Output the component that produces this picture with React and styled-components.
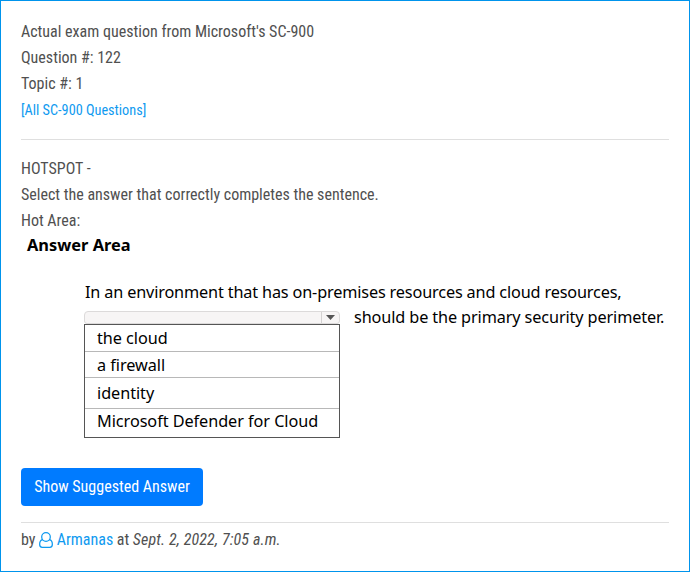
import React from "react";
import styled, { createGlobalStyle } from "styled-components";

const GlobalStyle = createGlobalStyle`
  *, *::before, *::after { box-sizing: border-box; }
  body { margin: 0; background: #fff; }
`;

const Card = styled.main`
  width: 690px;
  height: 572px;
  padding: 18px 20px 0;
  border: 1px solid #0094ec;
  background: #fff;
  color: #505050;
  font: 16px/26px "Roboto Condensed", Roboto, sans-serif;
  font-stretch: 75%;
  overflow: hidden;
`;

const Line = styled.div`
  height: 26px;
  white-space: nowrap;
`;

const Link = styled.a`
  color: #0f9af0;
  font-size: ${(p) => (p.$small ? "14.25px" : "16px")};
  text-decoration: none;
`;

const Divider = styled.hr`
  height: 1px;
  margin: ${(p) => p.$margin};
  border: 0;
  background: #dfdfdf;
`;

const AnswerArea = styled.section`
  height: 234px;
  color: #000;
  font: 16.25px/25px "Noto Sans", sans-serif;
  letter-spacing: -0.16px;
`;

const AreaTitle = styled.h2`
  margin: 0 0 0 6px;
  font: 700 16.4px/22px "Noto Sans", sans-serif;
  letter-spacing: 0;
`;

const Sentence = styled.div`
  margin: 24px 0 0 63px;
  white-space: nowrap;
`;

const SentenceStart = styled.div`
  padding-left: 1px;
`;

const SelectRow = styled.div`
  display: flex;
  height: 25px;
`;

const SentenceEnd = styled.span`
  letter-spacing: -0.12px;
`;

const Select = styled.div`
  width: 256px;
  margin-right: 14px;
  padding-top: 6px;
`;

const SelectBox = styled.div`
  display: flex;
  justify-content: flex-end;
  height: 13px;
  border: 1px solid #dcdada;
  border-radius: 4px 4px 3px 3px;
  background: #f7f5f5;
`;

const Arrow = styled.div`
  display: flex;
  align-items: center;
  justify-content: center;
  width: 18px;
  border-left: 1px solid #d4d2d2;
`;

const Options = styled.ul`
  margin: 0;
  padding: 0;
  border: 1px solid #555;
  list-style: none;
`;

const Option = styled.li`
  height: ${(p) => p.$height}px;
  padding: ${(p) => p.$top}px 0 0 12px;
  line-height: 23px;
  letter-spacing: -0.06px;
  & + & { border-top: 1px solid #b8b8b8; }
`;

const Button = styled.button`
  display: block;
  width: 182px;
  height: 38px;
  padding: 0;
  border: 0;
  border-radius: 4px;
  background: #007bff;
  color: #fff;
  font: inherit;
`;

const Byline = styled.footer`
  display: flex;
  align-items: center;
  gap: 3.6px;
  height: 26px;
  white-space: nowrap;
`;

const PostedAt = styled.em`
  letter-spacing: 0.14px;
`;

const UserIcon = styled.svg`
  width: 14px;
  height: 16px;
  fill: none;
  stroke: #0f9af0;
  stroke-width: 1.25;
`;

export default function App() {
  return (
    <>
      <GlobalStyle />
      <Card>
        <Line>Actual exam question from Microsoft's SC-900</Line>
        <Line>Question #: 122</Line>
        <Line>Topic #: 1</Line>
        <Line><Link $small>[All SC-900 Questions]</Link></Line>
        <Divider $margin="16px 0" />
        <Line>HOTSPOT -</Line>
        <Line>Select the answer that correctly completes the sentence.</Line>
        <Line>Hot Area:</Line>
        <AnswerArea>
          <AreaTitle>Answer Area</AreaTitle>
          <Sentence>
            <SentenceStart>
              In an environment that has on-premises resources and cloud resources,
            </SentenceStart>
            <SelectRow>
              <Select>
                <SelectBox>
                  <Arrow>
                    <svg width="9" height="5" viewBox="0 0 9 5"><path d="M0 0h9L4.5 5z" fill="#555" /></svg>
                  </Arrow>
                </SelectBox>
                <Options>
                  <Option $height={26} $top={2}>the cloud</Option>
                  <Option $height={26} $top={2}>a firewall</Option>
                  <Option $height={31} $top={4}>identity</Option>
                  <Option $height={29} $top={1}>Microsoft Defender for Cloud</Option>
                </Options>
              </Select>
              <SentenceEnd>should be the primary security perimeter.</SentenceEnd>
            </SelectRow>
          </Sentence>
        </AnswerArea>
        <Button>Show Suggested Answer</Button>
        <Divider $margin="16px 0 4px" />
        <Byline>
          <span>by</span>
          <UserIcon viewBox="0 0 14 16">
            <circle cx="7" cy="5" r="4.3" />
            <path d="M3.6 7.6C1.6 8 .65 9.9.65 12.2c0 1.9 1 3.1 2.5 3.1h7.7c1.5 0 2.5-1.2 2.5-3.1 0-2.3-.95-4.2-2.95-4.6" />
          </UserIcon>
          <Link>Armanas</Link>
          <span>at</span>
          <PostedAt>Sept. 2, 2022, 7:05 a.m.</PostedAt>
        </Byline>
      </Card>
    </>
  );
}
